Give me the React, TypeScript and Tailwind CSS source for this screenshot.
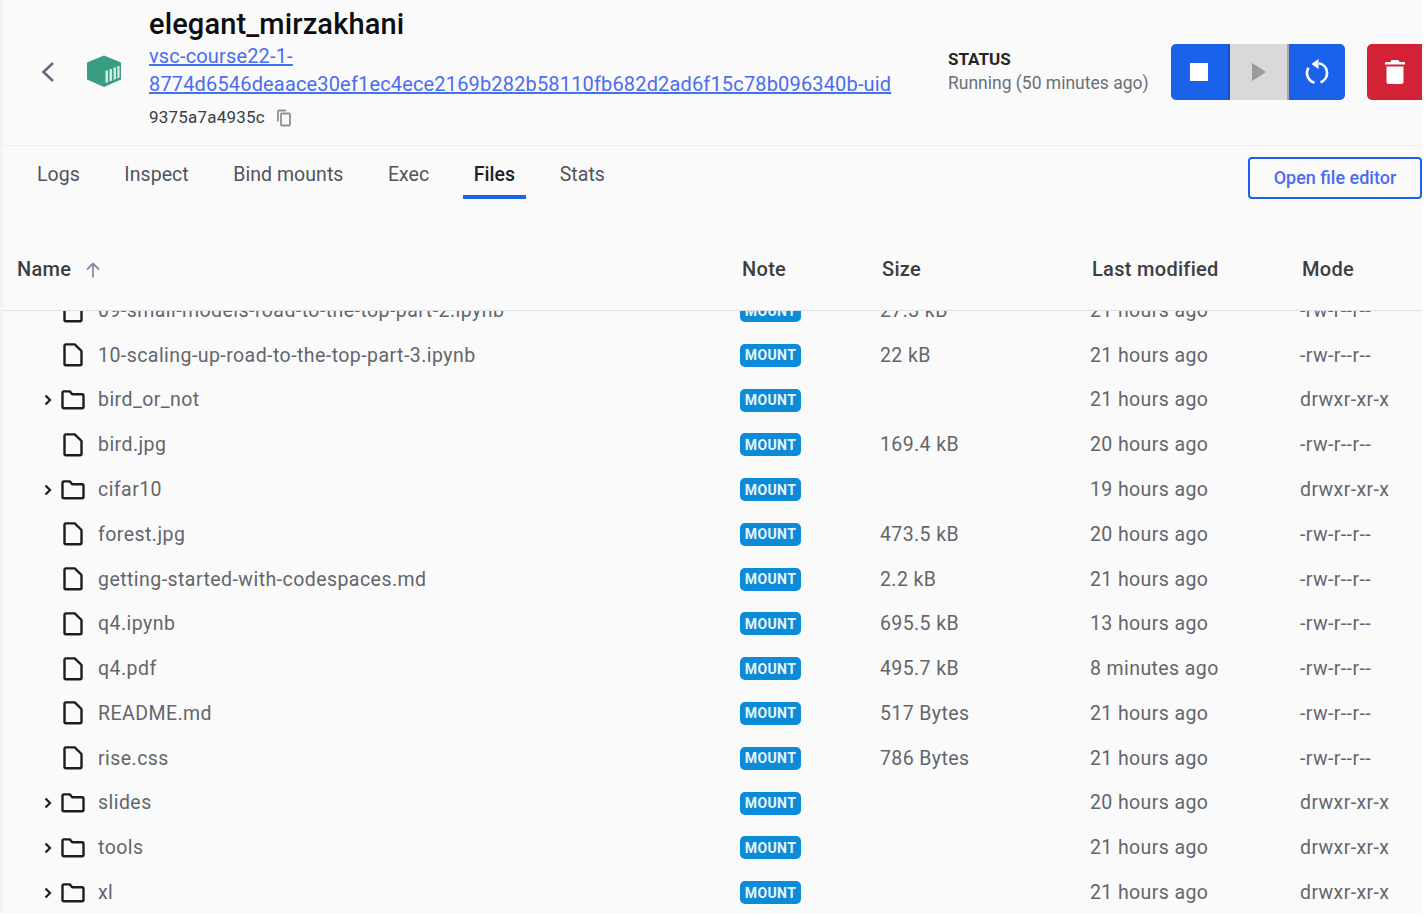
const rows = [
  { name: "09-small-models-road-to-the-top-part-2.ipynb", size: "27.3 kB", modified: "21 hours ago", mode: "-rw-r--r--" },
  { name: "10-scaling-up-road-to-the-top-part-3.ipynb", size: "22 kB", modified: "21 hours ago", mode: "-rw-r--r--" },
  { name: "bird_or_not", folder: true, size: "", modified: "21 hours ago", mode: "drwxr-xr-x" },
  { name: "bird.jpg", size: "169.4 kB", modified: "20 hours ago", mode: "-rw-r--r--" },
  { name: "cifar10", folder: true, size: "", modified: "19 hours ago", mode: "drwxr-xr-x" },
  { name: "forest.jpg", size: "473.5 kB", modified: "20 hours ago", mode: "-rw-r--r--" },
  { name: "getting-started-with-codespaces.md", size: "2.2 kB", modified: "21 hours ago", mode: "-rw-r--r--" },
  { name: "q4.ipynb", size: "695.5 kB", modified: "13 hours ago", mode: "-rw-r--r--" },
  { name: "q4.pdf", size: "495.7 kB", modified: "8 minutes ago", mode: "-rw-r--r--" },
  { name: "README.md", size: "517 Bytes", modified: "21 hours ago", mode: "-rw-r--r--" },
  { name: "rise.css", size: "786 Bytes", modified: "21 hours ago", mode: "-rw-r--r--" },
  { name: "slides", folder: true, size: "", modified: "20 hours ago", mode: "drwxr-xr-x" },
  { name: "tools", folder: true, size: "", modified: "21 hours ago", mode: "drwxr-xr-x" },
  { name: "xl", folder: true, size: "", modified: "21 hours ago", mode: "drwxr-xr-x" },
];

function FileIcon() {
  return (
    <svg width="20" height="24" viewBox="0 0 20 24" fill="none" stroke="#1a1d21" strokeWidth="2.400" strokeLinejoin="round">
      <path d="M1.500 2.800c0-.8.6-1.400 1.400-1.400h8.800l6.800 6.600v12.800c0 .8-.6 1.400-1.400 1.400H2.900c-.8 0-1.400-.6-1.400-1.400z" />
    </svg>
  );
}

function FolderIcon() {
  return (
    <svg width="24" height="20" viewBox="0 0 24 20" fill="none" stroke="#1a1d21" strokeWidth="2.400" strokeLinejoin="round">
      <path d="M1.500 2.900c0-.8.7-1.500 1.500-1.500h5.800l2.400 2.800H21c.8 0 1.500.7 1.500 1.500v11c0 .8-.7 1.500-1.500 1.500H3c-.8 0-1.500-.7-1.500-1.500z" />
    </svg>
  );
}

function Chevron() {
  return (
    <svg width="8" height="12" viewBox="0 0 8 12" fill="none" stroke="#1a1d21" strokeWidth="2.200">
      <path d="M1.500 1.500 6 6l-4.500 4.500" />
    </svg>
  );
}

function ContainerLogo() {
  return (
    <svg width="36" height="33" viewBox="0 0 36 33">
      <path d="M18 0.500 35 7.500V24.500L18 32 1 24.500V7.500z" fill="#3b9c84" />
      <path d="M19.500 15.500h2.500v11.500l-2.500 1zM23.500 14h2.500v11.500l-2.500 1zM27.500 12.500h2.500v11.500l-2.500 1zM31.300 11h2.300v11.500l-2.300 1z" fill="#d5e9e3" />
    </svg>
  );
}

function Row({ row, first }: { row: (typeof rows)[number]; first: boolean }) {
  return (
    <div className={`flex items-center h-[44.770px] shrink-0 text-[19.500px] tracking-[0.4px] text-[#62666c] ${first ? "-mt-[22.800px]" : ""}`}>
      <div className="w-[737px] flex items-center shrink-0">
        <div className="w-[58px] pl-[41px] shrink-0 flex items-center">{row.folder && <Chevron />}</div>
        <div className="w-[37px] shrink-0 flex items-center">
          {row.folder ? <FolderIcon /> : <div className="pl-[2px]"><FileIcon /></div>}
        </div>
        <span className="whitespace-nowrap tracking-[0.45px]">{row.name}</span>
      </div>
      <div className="w-[140px] shrink-0 flex items-center">
        <span className="flex items-center justify-center w-[61px] h-[23px] rounded-[5px] bg-[#0b8bd8] text-[#e8f5fd] text-[14px] leading-none font-bold">
          MOUNT
        </span>
      </div>
      <div className="w-[210px] shrink-0">{row.size}</div>
      <div className="w-[210px] shrink-0">{row.modified}</div>
      <div className="whitespace-nowrap">{row.mode}</div>
    </div>
  );
}

export default function App() {
  const tabs = ["Logs", "Inspect", "Bind mounts", "Exec", "Files", "Stats"];
  return (
    <div className="w-[1426px] h-[919px] bg-white overflow-hidden font-['Roboto',sans-serif]">
      <div className="w-[1422px] h-[914px] bg-[#fafafb] border-l-[3px] border-[#f4f4f6] flex flex-col">
        <header className="h-[146px] shrink-0 flex items-center border-b border-[#efeff1]">
          <button className="ml-[34px] w-[22px] flex justify-center -mt-[2px]">
            <svg width="16" height="24" viewBox="0 0 16 24" fill="none" stroke="#5f6b78" strokeWidth="2.500">
              <path d="M13 3 3.500 12 13 21" />
            </svg>
          </button>
          <div className="ml-[27px] -mt-[3px]"><ContainerLogo /></div>
          <div className="ml-[27px] w-[799px] h-[146px] flex flex-col">
            <h1 className="text-[29px] leading-[34px] font-medium tracking-[0.13px] text-[#0c0e11] mt-[7px]">elegant_mirzakhani</h1>
            <a className="text-[#4b6cf0] underline decoration-[#3f74ee] text-[20px] leading-[28px] tracking-[0.16px] mt-[1px]">
              vsc-course22-1-
              <br />
              8774d6546deaace30ef1ec4ece2169b282b58110fb682d2ad6f15c78b096340b-uid
            </a>
            <div className="flex items-center mt-[7px] text-[17px] leading-[24px] text-[#3a3d42]">
              <span className="tracking-[0.2px]">9375a7a4935c</span>
              <svg className="ml-[11px] mt-[3px]" width="16" height="18" viewBox="0 0 16 18" fill="none" stroke="#8d9196" strokeWidth="1.800">
                <path d="M2 12.500V2.500c0-.5.4-1 1-1h7" />
                <path d="M5 5.500c0-.6.4-1 1-1h7c.6 0 1 .4 1 1v10c0 .6-.4 1-1 1H6c-.6 0-1-.4-1-1z" />
              </svg>
            </div>
          </div>
          <div className="w-[223px] shrink-0 -mt-[4px]">
            <div className="text-[17px] leading-[24px] font-bold text-[#23262a]">STATUS</div>
            <div className="text-[17.500px] leading-[24px] text-[#6b7076] whitespace-nowrap">Running (50 minutes ago)</div>
          </div>
          <div className="flex h-[56px] rounded-[5px] overflow-hidden shrink-0 -mt-[2px]">
            <div className="w-[59px] bg-[#1b62ea] border-r-2 border-[#1550c0] flex items-center justify-center">
              <div className="w-[18px] h-[18px] mr-[2px] bg-white" />
            </div>
            <div className="w-[59px] bg-[#d9d9d9] border-r-2 border-[#a8a8a8] flex items-center justify-center">
              <svg width="16" height="20" viewBox="0 0 16 20"><path d="M1 1l14 9-14 9z" fill="#9a9a9a" /></svg>
            </div>
            <div className="w-[56px] bg-[#1b62ea] flex items-center justify-center">
              <svg width="26" height="28" viewBox="0 0 26 28" fill="none" stroke="white" strokeWidth="2.600">
                <path d="M15 5.200a10 10 0 0 1 1.500 19.200" />
                <path d="M10.500 24.700A10 10 0 0 1 4.500 9.800" />
                <path d="M14.500 1 7.500 6l7 5z" fill="white" stroke="none" />
              </svg>
            </div>
          </div>
          <div className="ml-[22px] w-[55px] h-[56px] shrink-0 bg-[#d32236] rounded-l-[5px] flex items-center justify-center -mt-[2px]">
            <svg width="22" height="26" viewBox="0 0 22 26" fill="white">
              <path d="M7.500 1h7l1 2H21v2.500H1V3h5.500zM2.500 7.500h17V23c0 1.200-.9 2-2 2h-13c-1.100 0-2-.8-2-2z" />
            </svg>
          </div>
        </header>

        <div className="h-[70px] shrink-0 flex items-start">
          <nav className="flex ml-[23px] gap-[22.500px] mt-[11px]">
            {tabs.map((t) => (
              <div
                key={t}
                className={`h-[42px] px-[11px] flex items-start pt-[5px] text-[19.500px] leading-[26px] tracking-[0.05px] ${
                  t === "Files" ? "font-medium text-[#1c1f23] border-b-[4px] border-[#1b62ea]" : "text-[#51555b]"
                }`}
              >
                {t}
              </div>
            ))}
          </nav>
          <button className="ml-auto mt-[11px] w-[174px] h-[42px] rounded-[4px] border-2 border-[#1b62ea] text-[#4b6cf0] font-medium text-[18px] leading-[34px] pb-[1px]">
            Open file editor
          </button>
        </div>

        <div className="h-[95px] shrink-0 flex items-center border-b border-[#dfdfe1] text-[20px] font-medium tracking-[0.3px] text-[#3b3e43] pt-[12px]">
          <div className="w-[739px] pl-[14px] shrink-0 flex items-center">
            Name
            <svg className="ml-[13px] mt-[2px]" width="18" height="18" viewBox="0 0 18 18" fill="none" stroke="#7d8aa5" strokeWidth="1.800">
              <path d="M9 16.500V2.500M3 8.500l6-6 6 6" />
            </svg>
          </div>
          <div className="w-[140px] shrink-0">Note</div>
          <div className="w-[210px] shrink-0">Size</div>
          <div className="w-[210px] shrink-0">Last modified</div>
          <div>Mode</div>
        </div>

        <div className="flex-1 min-h-0 flex flex-col overflow-hidden">
          {rows.map((row, i) => (
            <Row key={row.name} row={row} first={i === 0} />
          ))}
        </div>
      </div>
    </div>
  );
}
